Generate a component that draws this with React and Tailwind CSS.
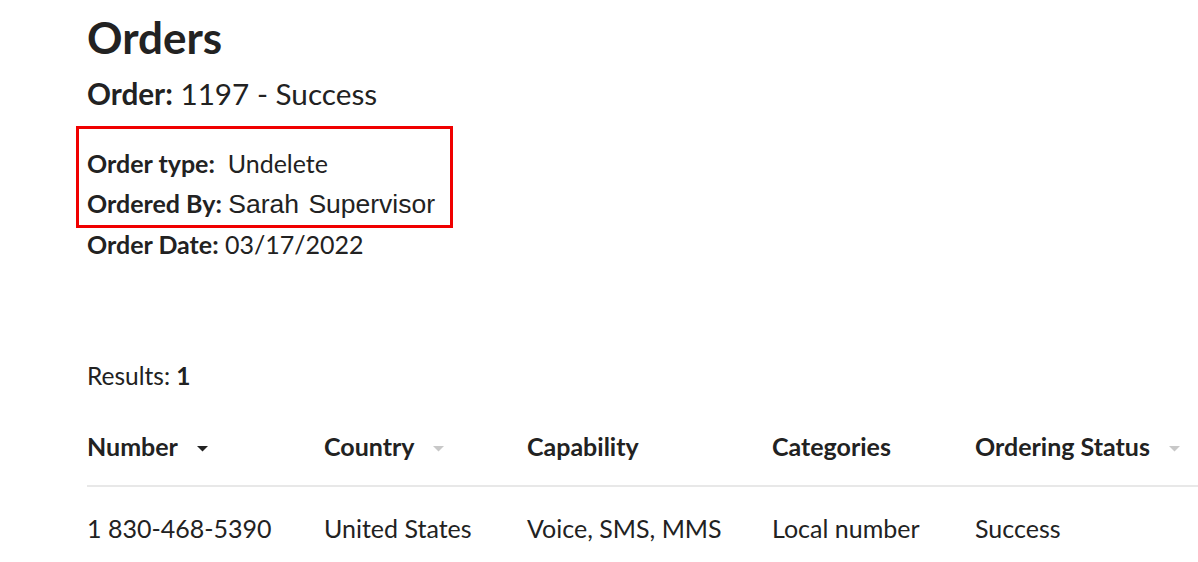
const columns = [
  { label: "Number", sort: "active", width: "w-[237px]" },
  { label: "Country", sort: "idle", width: "w-[203px]" },
  { label: "Capability", width: "w-[245px]" },
  { label: "Categories", width: "w-[203px]" },
  { label: "Ordering Status", sort: "idle", width: "flex-1" },
];

const row = ["1 830-468-5390", "United States", "Voice, SMS, MMS", "Local number", "Success"];

function Caret({ active }) {
  return (
    <svg width="11" height="6" viewBox="0 0 11 6" className="ml-[19px] mt-1">
      <path d="M0 0 L11 0 L5.5 5.5 Z" fill={active ? "#222222" : "#c8c8c8"} />
    </svg>
  );
}

export default function App() {
  return (
    <div className="min-h-screen bg-white pl-[87px] text-[#222222] font-['Lato','Noto_Sans',sans-serif]">
      <h1 className="pt-[11px] text-[44px] font-bold leading-[52px]">Orders</h1>
      <div className="mt-[14px] text-[29.7px] leading-[34px]">
        <span className="font-bold">Order:</span> 1197 - Success
      </div>

      <div className="mt-[15px] -ml-[11px] w-[377px] border-[3px] border-[#f00000] pl-[8px] pt-[14px] pb-[1px]">
        <div className="text-[25px] leading-[40px]">
          <span className="font-bold">Order type:</span>&nbsp; Undelete
        </div>
        <div className="text-[25px] leading-[40px]">
          <span className="font-bold">Ordered By:</span>{" "}
          <span className="font-['Liberation_Sans',Arial,sans-serif] text-[26.5px] [word-spacing:2px]">Sarah Supervisor</span>
        </div>
      </div>
      <div className="-mt-[4px] text-[25px] leading-[40px]">
        <span className="font-bold">Order Date:</span> 03/17/2022
      </div>

      <div className="mt-[97px] text-[24.5px] leading-[30px]">
        Results: <span className="font-bold">1</span>
      </div>

      <div className="mt-[20px]">
        <div className="flex h-[76px] items-center border-b-2 border-[#e8e8e8] pb-[2px]">
          {columns.map((c) => (
            <div key={c.label} className={`${c.width} flex items-center text-[25px] font-bold`}>
              {c.label}
              {c.sort && <Caret active={c.sort === "active"} />}
            </div>
          ))}
        </div>
        <div className="flex h-[84px] items-center">
          {row.map((v, i) => (
            <div key={i} className={`${columns[i].width} text-[25px]`}>
              {v}
            </div>
          ))}
        </div>
      </div>
    </div>
  );
}
